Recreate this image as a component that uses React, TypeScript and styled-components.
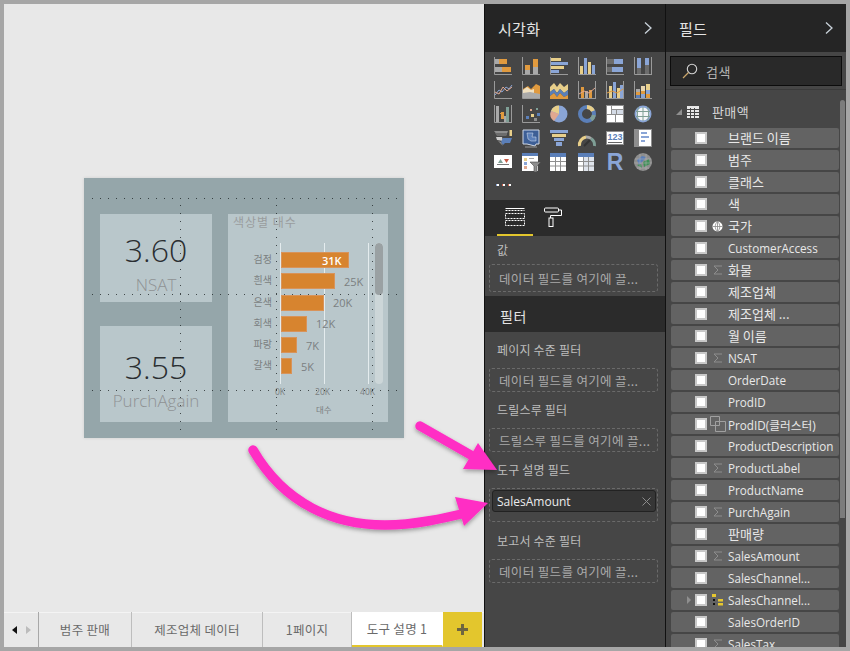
import React from "react"
import styled, { createGlobalStyle } from "styled-components"

const GlobalStyle = createGlobalStyle`
  html, body {
    margin: 0;
    padding: 0;
    background: #a6a6a6;
    overflow: hidden;
  }
`

const Font = `"Noto Sans CJK KR", "Open Sans", sans-serif`
const LatinFont = `"Open Sans", "Noto Sans CJK KR", sans-serif`

const Frame = styled.div`
  position: relative;
  width: 850px;
  height: 651px;
  box-sizing: border-box;
  padding: 4px;
  background: #a6a6a6;
  display: flex;
  overflow: hidden;
  font-family: ${LatinFont};
`

const Canvas = styled.div`
  width: 480px;
  background: #e8e8e8;
  display: flex;
  flex-direction: column;
  flex-shrink: 0;
`

const CanvasBody = styled.div`
  flex: 1;
  padding: 174px 0 0 80px;
`

const Report = styled.div`
  position: relative;
  width: 320px;
  height: 260px;
  box-sizing: border-box;
  padding: 36px 16px 16px;
  background: #95a6aa;
  box-shadow: 0 0 3px rgba(0, 0, 0, 0.12);
  display: grid;
  grid-template-columns: 112px 160px;
  grid-template-rows: 88px 96px;
  column-gap: 16px;
  row-gap: 24px;
`

const Card = styled.div`
  background: #b9c7cb;
  display: flex;
  flex-direction: column;
  align-items: center;
  min-width: 0;
`

const BigNumber = styled.div<{ $top: number }>`
  font-family: "Open Sans", sans-serif;
  font-weight: 300;
  font-size: 32px;
  line-height: 40px;
  color: #2a2e31;
  margin-top: ${(p) => p.$top}px;
`

const CardLabel = styled.div<{ $gap: number }>`
  font-family: "Open Sans", sans-serif;
  font-weight: 300;
  font-size: 17px;
  line-height: 22px;
  color: #8f9294;
  margin-top: ${(p) => p.$gap}px;
`

const ChartCard = styled.div`
  grid-row: 1 / 3;
  grid-column: 2;
  background: #b9c7cb;
  padding: 0 0 0 5px;
  display: flex;
  flex-direction: column;
`

const ChartTitle = styled.div`
  font-family: ${Font};
  font-size: 12px;
  line-height: 16px;
  color: #9a9d9e;
  letter-spacing: 1px;
`

const ChartBody = styled.div`
  display: flex;
  margin-top: 13px;
  padding-left: 16px;
`

const BarLabels = styled.div`
  width: 23px;
  padding-top: 8px;
  display: flex;
  flex-direction: column;
  gap: 5.3px;
  align-items: flex-end;
`

const BarLabel = styled.div`
  height: 16px;
  font-family: ${Font};
  font-size: 10px;
  line-height: 16px;
  color: #7b7f81;
  white-space: nowrap;
`

const Plot = styled.div`
  position: relative;
  width: 90px;
  margin-left: 8px;
  height: 141px;
  padding-top: 9px;
  box-sizing: border-box;
  display: flex;
  flex-direction: column;
  gap: 5.3px;
  border-left: 1px solid #e4ecee;
`

const GridLine = styled.div<{ $left: number }>`
  position: absolute;
  top: 0;
  bottom: 0;
  left: ${(p) => p.$left}px;
  width: 1px;
  background: #e4ecee;
`

const BarRow = styled.div`
  position: relative;
  display: flex;
  align-items: center;
  height: 16px;
`

const Bar = styled.div`
  height: 16px;
  background: #d7842f;
  box-shadow: inset 0 0 0 1px #d8935a;
  flex-shrink: 0;
`

const BarValue = styled.span<{ $inside?: boolean }>`
  font-family: "Open Sans", sans-serif;
  font-size: 11px;
  font-weight: ${(p) => (p.$inside ? 600 : 400)};
  color: ${(p) => (p.$inside ? "#fff" : "#7b7f81")};
  margin-left: ${(p) => (p.$inside ? "-27px" : "9px")};
  position: relative;
  white-space: nowrap;
`

const ChartScroll = styled.div`
  width: 8px;
  height: 141px;
  margin-left: 5px;
  border-radius: 4px;
  background: #ccd6d8;
  overflow: hidden;
`

const ChartThumb = styled.div`
  height: 52px;
  background: #9aa1a3;
  border-radius: 4px;
`

const AxisRow = styled.div`
  height: 14px;
  margin: 1px 0 0 42px;
  width: 100px;
  font-size: 8.5px;
  color: #7b7f81;
  display: flex;
  justify-content: space-between;
  font-family: "Open Sans", sans-serif;
  line-height: 14px;
`

const AxisTitle = styled.div`
  font-family: ${Font};
  font-size: 8.5px;
  line-height: 12px;
  color: #7b7f81;
  padding: 4px 0 0 83px;
`

const DotH = styled.div<{ $top: number }>`
  position: absolute;
  left: 8px;
  right: 6px;
  top: ${(p) => p.$top}px;
  height: 1px;
  background-image: linear-gradient(to right, rgba(25, 30, 31, 0.75) 1px, transparent 1px);
  background-size: 8px 1px;
`

const DotV = styled.div<{ $left: number }>`
  position: absolute;
  top: 27px;
  bottom: 6px;
  left: ${(p) => p.$left}px;
  width: 1px;
  background-image: linear-gradient(to bottom, rgba(25, 30, 31, 0.75) 1px, transparent 1px);
  background-size: 1px 8px;
`

const TabBar = styled.div`
  height: 35px;
  display: flex;
  align-items: stretch;
  background: #e8e8e8;
  box-shadow: inset 0 1px 0 #f4f4f4;
`

const TabNav = styled.div`
  width: 35px;
  box-sizing: border-box;
  display: flex;
  align-items: center;
  justify-content: center;
  gap: 9px;
  border-right: 1px solid #a8a8a8;
`

const Tab = styled.div<{ $active?: boolean; $w: number }>`
  width: ${(p) => p.$w}px;
  box-sizing: border-box;
  display: flex;
  align-items: center;
  justify-content: center;
  font-family: ${Font};
  font-size: 12.5px;
  color: #6a6a6a;
  letter-spacing: 0.3px;
  border-right: 1px solid ${(p) => (p.$active ? "transparent" : "#bdbdbd")};
  background: ${(p) => (p.$active ? "#fff" : "transparent")};
  border-bottom: ${(p) => (p.$active ? "2px solid #e3c62d" : "none")};
`

const AddTab = styled.div`
  width: 39px;
  background: #e3c62d;
  display: flex;
  align-items: center;
  justify-content: center;
`

const VizPanel = styled.div`
  width: 181px;
  box-sizing: border-box;
  flex-shrink: 0;
  background: #464646;
  display: flex;
  flex-direction: column;
  border-left: 1px solid #111;
`

const FieldsPanel = styled.div`
  width: 181px;
  box-sizing: border-box;
  flex-shrink: 0;
  background: #464646;
  display: flex;
  flex-direction: column;
  position: relative;
  overflow: hidden;
  border-left: 1px solid #111;
`

const PanelHeader = styled.div`
  height: 48px;
  flex-shrink: 0;
  background: #252525;
  display: flex;
  align-items: center;
  justify-content: space-between;
  padding: 0 12px 0 13px;
  font-family: ${Font};
  font-size: 15px;
  color: #e4e4e4;
  letter-spacing: 0.3px;
`

const IconGrid = styled.div`
  height: 148px;
  flex-shrink: 0;
  box-sizing: border-box;
  padding: 5px 0 0 9px;
  display: grid;
  grid-template-columns: repeat(6, 18px);
  grid-auto-rows: 18px;
  column-gap: 10px;
  row-gap: 6px;
`

const MoreSlot = styled.div`
  margin: 4px 0 0 2px;
  line-height: 0;
`

const VizTabs = styled.div`
  height: 36px;
  flex-shrink: 0;
  background: #2b2b2b;
  display: flex;
  padding-left: 12px;
`

const VizTab = styled.div<{ $active?: boolean }>`
  width: 36px;
  box-sizing: border-box;
  margin-right: 2px;
  display: flex;
  align-items: center;
  justify-content: center;
  border-bottom: 2px solid ${(p) => (p.$active ? "#e3c62d" : "transparent")};
`

const SectionLabel = styled.div`
  font-family: ${Font};
  font-size: 12px;
  line-height: 16px;
  color: #bdbdbd;
  padding-left: 12px;
  letter-spacing: 0.2px;
`

const DropZone = styled.div<{ $mt?: number; $mb?: number; $h?: number }>`
  height: ${(p) => p.$h || 24}px;
  margin: ${(p) => p.$mt ?? 10}px 7px ${(p) => p.$mb ?? 10}px 4px;
  box-sizing: border-box;
  border: 1px dashed #6a6a6a;
  border-radius: 3px;
  display: flex;
  align-items: center;
  padding-left: 9px;
  font-family: ${Font};
  font-size: 12.5px;
  color: #a9a9a9;
  white-space: nowrap;
  letter-spacing: 0.35px;
`

const FilledZone = styled.div`
  height: 34px;
  margin: 10px 7px 11px 4px;
  box-sizing: border-box;
  border: 1px dashed #6a6a6a;
  border-radius: 3px;
  padding: 1px 1px 1px 2px;
`

const FilledField = styled.div`
  height: 22px;
  box-sizing: border-box;
  background: #363636;
  border: 1px solid #222;
  border-radius: 3px;
  display: flex;
  align-items: center;
  justify-content: space-between;
  padding: 0 4px 0 4px;
  font-family: "Open Sans", sans-serif;
  font-size: 12px;
  color: #ececec;
`

const FilterHeader = styled.div`
  height: 36px;
  flex-shrink: 0;
  box-sizing: border-box;
  background: #2b2b2b;
  margin-bottom: 10px;
  display: flex;
  align-items: center;
  padding: 3px 0 0 15px;
  font-family: ${Font};
  font-size: 14px;
  color: #e4e4e4;
  letter-spacing: 0.5px;
`

const ValueSection = styled.div`
  height: 60px;
  flex-shrink: 0;
  box-sizing: border-box;
  padding-top: 6px;
`

const SearchRow = styled.div`
  height: 38px;
  flex-shrink: 0;
  box-sizing: border-box;
  padding: 4px 4px 0;
  border-bottom: 1px solid #3a3a3a;
`

const SearchBox = styled.div`
  height: 30px;
  box-sizing: border-box;
  background: #292929;
  border: 1px solid #0c0c0c;
  display: flex;
  align-items: center;
  padding-left: 11px;
  gap: 8px;
  font-family: ${Font};
  font-size: 13px;
  color: #b4b4b4;
  letter-spacing: 0.5px;
`

const FieldList = styled.div`
  flex: 1;
  padding: 12px 0 0 5px;
  display: flex;
  flex-direction: column;
  gap: 2px;
`

const TableRow = styled.div`
  height: 20px;
  margin-bottom: 4px;
  padding-left: 4px;
  display: flex;
  align-items: center;
  font-family: ${Font};
  font-size: 13px;
  color: #d4d4d4;
  letter-spacing: 0.4px;
`

const TableArrow = styled.span`
  margin-right: 4px;
  line-height: 0;
`

const TableGlyph = styled.span`
  margin-right: 13px;
  line-height: 0;
`

const TableName = styled.span`
  margin-top: -2px;
`

const Row = styled.div`
  position: relative;
  width: 168px;
  height: 20px;
  flex-shrink: 0;
  box-sizing: border-box;
  background: #636363;
  border-radius: 2px;
  display: flex;
  align-items: center;
  color: #e8e8e8;
  white-space: nowrap;
`

const RowName = styled.span<{ $kr: boolean }>`
  font-family: ${(p) => (p.$kr ? Font : LatinFont)};
  font-size: ${(p) => (p.$kr ? 13 : 11.7)}px;
  margin-top: ${(p) => (p.$kr ? -2 : 0)}px;
`

const Check = styled.span`
  width: 12px;
  height: 12px;
  box-sizing: border-box;
  flex-shrink: 0;
  background: #fff;
  border: 2px solid #c8c8c8;
  margin-left: 24px;
`

const TypeSlot = styled.span`
  width: 21px;
  height: 16px;
  flex-shrink: 0;
  display: flex;
  align-items: center;
  justify-content: center;
`

const Expander = styled.span`
  position: absolute;
  left: 16px;
  top: 6px;
  width: 0;
  height: 0;
  border-left: 4px solid #8f8f8f;
  border-top: 4px solid transparent;
  border-bottom: 4px solid transparent;
`

const Scrollbar = styled.div`
  position: absolute;
  right: 1px;
  top: 96px;
  width: 5px;
  height: 418px;
  border-radius: 3px 3px 0 0;
  background: #7c7c7c;
`

const Arrows = styled.svg`
  position: absolute;
  left: 0;
  top: 0;
  pointer-events: none;
`

const Chevron = () => (
  <svg width="10" height="14" viewBox="0 0 10 14">
    <path d="M2 1.5 L8 7 L2 12.5" fill="none" stroke="#c9d2da" strokeWidth="1.3" />
  </svg>
)

const c = { o: "#e09a3f", b: "#8aa5d6", y: "#e8cf8a", g: "#a9a9a9", d: "#6c6c6c", r: "#e0a890", w: "#ffffff", l: "#d4dbe6", a: "#8e8e8e", s: "#5b7fb8", t: "#7f9f96" }

type R = [number, number, number, number, string]

const Axis = () => <path d="M0.5 0 V17.5 H18" fill="none" stroke="#9a9a9a" strokeWidth="1" />

const rects = (list: R[]) => list.map((r, i) => <rect key={i} x={r[0]} y={r[1]} width={r[2]} height={r[3]} fill={r[4]} />)

const vizIcons: React.ReactNode[] = [
  <><Axis />{rects([[1, 2, 4, 5, c.g], [5, 2, 8, 5, c.o], [1, 10, 7, 5, c.g], [8, 10, 9, 5, c.o]])}</>,
  <><Axis />{rects([[3, 8, 5, 9, c.o], [3, 13, 5, 4, c.g], [11, 2, 5, 15, c.o], [11, 10, 5, 7, c.g]])}</>,
  <><Axis />{rects([[1, 1, 10, 3, c.y], [1, 5, 17, 3, c.b], [1, 9, 13, 3, c.y], [1, 13, 8, 3, c.b]])}</>,
  <><Axis />{rects([[2, 9, 3, 8, c.y], [6, 1, 3, 16, c.b], [10, 5, 3, 12, c.y], [14, 8, 3, 9, c.b]])}</>,
  <><Axis />{rects([[1, 2, 7, 5, c.d], [8, 2, 9, 5, c.b], [1, 10, 5, 5, c.d], [6, 10, 11, 5, c.b]])}</>,
  <><Axis /><path d="M17.5 0 V17.5" stroke="#9a9a9a" />{rects([[3, 1, 4, 10, c.b], [3, 11, 4, 6, c.d], [11, 1, 4, 7, c.b], [11, 8, 4, 9, c.d]])}</>,
  <><Axis /><path d="M1 14 L5 9 L8 11 L12 6 L15 8 L18 4" fill="none" stroke={c.b} strokeWidth="1" /><path d="M1 11 L5 13 L9 6 L13 10 L18 6" fill="none" stroke={c.r} strokeWidth="1" /></>,
  <><Axis /><path d="M1 8 L6 5 L9 8 L14 3 L18 5 V17 H1Z" fill={c.o} /><path d="M1 9 L5 6 L9 9 L12 8 V17 H1Z" fill="#f0e0c0" /><path d="M1 12 L8 11 L18 13 V17 H1Z" fill={c.g} /></>,
  <><path d="M0 6 L4 2 L7 6 L10 2 L14 6 L18 3 V9 L14 12 L10 8 L7 12 L4 8 L0 11Z" fill={c.y} /><path d="M0 11 L4 8 L7 12 L10 8 L14 12 L18 9 V14 L14 16 L10 12 L7 16 L4 12 L0 15Z" fill={c.s} /><path d="M0 15 L4 12 L7 16 L10 12 L14 16 L18 14 V18 H0Z" fill={c.o} /></>,
  <><Axis /><path d="M17.5 0 V17.5" stroke="#9a9a9a" />{rects([[3, 6, 3, 11, c.o], [7, 10, 3, 7, c.g], [11, 9, 3, 8, c.o]])}<path d="M1 13 L6 10 L11 12 L17 7" fill="none" stroke={c.r} /></>,
  <><Axis /><path d="M17.5 0 V17.5" stroke="#9a9a9a" />{rects([[3, 5, 3, 12, c.y], [7, 1, 3, 16, c.b], [11, 7, 3, 10, c.y], [14, 4, 3, 13, c.b]])}<path d="M1 12 L6 10 L11 12 L17 8" fill="none" stroke={c.o} /></>,
  <><Axis />{rects([[2, 8, 4, 3, c.g], [2, 11, 4, 3, c.o], [2, 14, 4, 3, c.s], [7, 5, 4, 5, "#e8d5ae"], [7, 10, 4, 3, c.o], [7, 13, 4, 4, c.b], [12, 3, 4, 6, c.y], [12, 9, 4, 4, c.b], [12, 13, 4, 4, c.o]])}</>,
  <><Axis /><path d="M17.5 0 V17.5" stroke="#9a9a9a" />{rects([[2, 1, 3, 16, c.g], [6, 8, 4, 1, c.o], [7, 7, 3, 7, c.o], [10, 11, 2, 6, c.g], [12, 2, 3, 15, c.t]])}</>,
  <><Axis />{rects([[4, 11, 3, 3, c.s], [8, 4, 2, 2, c.r], [9, 9, 3, 3, c.y], [14, 3, 2, 2, c.t], [15, 8, 3, 3, c.s], [12, 13, 3, 3, c.a]])}</>,
  <><circle cx="9" cy="9" r="8.5" fill={c.b} /><path d="M9 9 L9 0.5 A8.5 8.5 0 0 0 1 6Z" fill={c.y} /><path d="M9 9 L1 6 A8.5 8.5 0 0 0 4 16Z" fill={c.r} /></>,
  <><circle cx="9" cy="9" r="7" fill="none" stroke={c.s} strokeWidth="4" /><path d="M9 2 A7 7 0 0 1 15 6" fill="none" stroke={c.y} strokeWidth="4" /><path d="M15.8 10 A7 7 0 0 1 13 14.7" fill="none" stroke={c.t} strokeWidth="4" /></>,
  <><rect width="18" height="18" fill={c.a} />{rects([[1, 1, 4, 8, c.w], [6, 1, 11, 3, c.w], [6, 5, 4, 4, c.l], [11, 5, 6, 4, c.l], [1, 10, 8, 7, c.w], [10, 10, 7, 7, c.w]])}</>,
  <><circle cx="9" cy="9" r="8.5" fill={c.b} /><circle cx="9" cy="9" r="6.5" fill="#f4f6f8" /><path d="M9 2 V16 M4.5 2 C3 7 3 11 4.5 16 M13.5 2 C15 7 15 11 13.5 16 M2 6.5 H16 M2 11.5 H16" stroke={c.t} fill="none" strokeWidth="1" /></>,
  <><path d="M0 2 H14 L12 7 H4Z" fill={c.a} /><path d="M1 4 H13 L12 7 H3Z" fill={c.d} /><path d="M2 8 H8 L9 12 L3 11Z" fill="#cfcfcf" /><path d="M9 9 H18 L16 14 H11 L9 16 L7 13Z" fill={c.s} /><path d="M4 12 L9 17 L7 13Z" fill={c.a} /><rect x="15.5" y="1" width="2.5" height="6" fill={c.y} /></>,
  <><path d="M1 1 H17 V15 H14 L13 17 L5 15 H1Z" fill="#3d5f96" stroke="#cfd8e6" strokeWidth="1" /><path d="M5 4 H11 L10 8 H14 V12 H9 L6 10Z" fill={c.s} stroke="#dfe6f0" strokeWidth="0.5" /><path d="M3 18 H15" stroke="#999" /></>,
  <>{rects([[0, 1, 18, 3, c.b], [2, 5, 14, 3, c.y], [4, 9, 10, 3, c.b], [6, 13, 6, 4, c.b]])}</>,
  <><path d="M1.5 17 A8 8 0 0 1 8 8" fill="none" stroke={c.y} strokeWidth="3" /><path d="M8 8 A8 8 0 0 1 13 9.5" fill="none" stroke={c.g} strokeWidth="3" /><path d="M13 9.5 A8 8 0 0 1 16.5 17" fill="none" stroke={c.t} strokeWidth="3" /><path d="M6 17 L12 11" stroke="#333" strokeWidth="2" /></>,
  <><rect x="0.5" y="2.5" width="17" height="13" fill={c.w} stroke={c.a} /><text x="9" y="11" textAnchor="middle" fontSize="9" fontWeight="700" fontFamily="Liberation Sans" fill={c.s}>123</text><rect x="2" y="13" width="14" height="1" fill="#666" /></>,
  <><rect x="0.5" y="0.5" width="17" height="17" fill={c.w} stroke={c.a} /><rect x="1" y="1" width="4" height="16" fill={c.a} />{rects([[7, 3, 6, 2, c.b], [7, 7, 8, 2, c.b], [7, 11, 4, 2, c.b]])}</>,
  <><rect x="0" y="2" width="18" height="13" fill={c.w} /><path d="M4 10 L6.5 6 L9 10Z" fill={c.t} /><path d="M10 6 H15 L12.5 10Z" fill="#c65a45" /><rect x="3" y="11" width="12" height="1" fill="#777" /></>,
  <><rect x="0" y="0" width="16" height="18" fill={c.w} /><rect x="0" y="0" width="16" height="3" fill={c.s} />{rects([[2, 5, 3, 3, c.y], [2, 9, 3, 3, c.b], [2, 13, 3, 3, c.r], [7, 5, 5, 1, c.g]])}<path d="M8 9 H19 L15 13 V19 H12 V13Z" fill={c.a} stroke="#464646" strokeWidth="0.6" /></>,
  <><rect width="16" height="18" x="0" fill={c.w} /><rect width="16" height="4" fill={c.s} /><path d="M5.5 4 V18 M10.5 4 V18 M0 8.5 H16 M0 13 H16" stroke={c.a} strokeWidth="1" /></>,
  <><rect width="16" height="18" x="0" fill="#dfe4ec" /><rect width="16" height="4" fill={c.s} /><rect x="0" y="4" width="5" height="14" fill={c.w} /><path d="M5.5 4 V18 M10.5 4 V18 M0 8.5 H16 M0 13 H16" stroke={c.a} strokeWidth="1" /></>,
  <><text x="9" y="17" textAnchor="middle" fontSize="23" fontWeight="700" fontFamily="Liberation Sans" fill={c.b}>R</text></>,
  <><circle cx="9" cy="9" r="9" fill={c.a} /><path d="M3 7 L8 3 L12 4 L9 8 L5 12Z" fill={c.s} /><path d="M9 9 L15 6 L16 11 L10 14Z" fill="#3f8f58" /><path d="M3 12 L7 11 L8 15Z" fill="#3f8f58" /><path d="M1 6 H17 M0 10 H18 M3 15 H15 M6 1 V17 M12 1 V17" stroke="#b5b5b5" strokeWidth="0.5" /></>,
]

const MoreDots = () => (
  <svg width="16" height="4" viewBox="0 0 16 4">
    <rect x="0" y="1" width="3" height="2" fill="#fff" />
    <rect x="0" y="1" width="1" height="2" fill="#8aa5d6" />
    <rect x="6" y="1" width="3" height="2" fill="#fff" />
    <rect x="6" y="1" width="1" height="2" fill="#c65a45" />
    <rect x="12" y="1" width="3" height="2" fill="#fff" />
    <rect x="12" y="1" width="1" height="2" fill="#c65a45" />
  </svg>
)

const Sigma = () => (
  <svg width="10" height="10" viewBox="0 0 10 10">
    <path d="M9 1 H1 L5 5 L1 9 H9" fill="none" stroke="#8e8e8e" strokeWidth="1" />
  </svg>
)

const Globe = () => (
  <svg width="11" height="11" viewBox="0 0 11 11">
    <circle cx="5.5" cy="5.5" r="5" fill="#fff" />
    <path d="M5.5 0.5 V10.5 M0.5 5.5 H10.5 M5.5 0.5 C2.5 3 2.5 8 5.5 10.5 M5.5 0.5 C8.5 3 8.5 8 5.5 10.5" fill="none" stroke="#8a8a8a" strokeWidth="0.8" />
  </svg>
)

const Cluster = () => (
  <svg width="16" height="16" viewBox="0 0 16 16">
    <path d="M0.5 0.5 H9.5 V9.5 H0.5Z M5.5 5.5 H15.5 V15.5 H5.5Z" fill="none" stroke="#a0a0a0" strokeWidth="1" />
  </svg>
)

const Hierarchy = () => (
  <svg width="11" height="12" viewBox="0 0 11 12">
    <rect x="0" y="0" width="4" height="3" fill="#e6c72f" />
    <rect x="6" y="5" width="5" height="2.5" fill="#e6c72f" />
    <rect x="6" y="9" width="5" height="2.5" fill="#e6c72f" />
    <rect x="1" y="5" width="2" height="2" fill="#111" />
    <rect x="1" y="9" width="2" height="2" fill="#111" />
  </svg>
)

const TableIcon = () => (
  <svg width="12" height="12" viewBox="0 0 12 12">
    <rect width="12" height="12" fill="#e8e8e8" />
    <path d="M0 3.5 H12 M0 6.5 H12 M0 9.5 H12 M3.5 2 V12 M7.5 2 V12" stroke="#464646" strokeWidth="1" />
  </svg>
)

const FieldsTabIcon = () => (
  <svg width="20" height="20" viewBox="0 0 20 20">
    <path d="M0.5 1.5 H19.5" stroke="#fff" strokeWidth="1" fill="none" />
    <path d="M0.5 3.5 H19.5" stroke="#fff" strokeWidth="1" strokeDasharray="2 1" fill="none" />
    <rect x="0.5" y="6.5" width="19" height="5" fill="none" stroke="#fff" strokeDasharray="2 1" />
    <rect x="0.5" y="13.5" width="19" height="5" fill="none" stroke="#fff" strokeDasharray="2 1" />
  </svg>
)

const RollerIcon = () => (
  <svg width="18" height="20" viewBox="0 0 18 20">
    <rect x="0.5" y="1" width="14" height="4" rx="1" fill="none" stroke="#fff" />
    <path d="M14.5 3 H17.5 V8.5 H6.5 V11" fill="none" stroke="#fff" />
    <rect x="5" y="11" width="4" height="8.5" fill="none" stroke="#fff" />
  </svg>
)

const SearchIcon = () => (
  <svg width="16" height="16" viewBox="0 0 16 16">
    <circle cx="10" cy="6" r="4.7" fill="none" stroke="#d4d4d4" strokeWidth="1.1" />
    <path d="M6.5 9.5 L1 15" stroke="#c9a56a" strokeWidth="1.3" />
  </svg>
)

const Close = () => (
  <svg width="9" height="9" viewBox="0 0 9 9">
    <path d="M0.5 0.5 L8.5 8.5 M8.5 0.5 L0.5 8.5" stroke="#8c8c8c" strokeWidth="1" />
  </svg>
)

type Kind = "sigma" | "globe" | "cluster" | "hier"

const fields: { name: string; kind?: Kind; expand?: boolean }[] = [
  { name: "브랜드 이름" },
  { name: "범주" },
  { name: "클래스" },
  { name: "색" },
  { name: "국가", kind: "globe" },
  { name: "CustomerAccess" },
  { name: "화물", kind: "sigma" },
  { name: "제조업체" },
  { name: "제조업체 ..." },
  { name: "월 이름" },
  { name: "NSAT", kind: "sigma" },
  { name: "OrderDate" },
  { name: "ProdID" },
  { name: "ProdID(클러스터)", kind: "cluster" },
  { name: "ProductDescription" },
  { name: "ProductLabel", kind: "sigma" },
  { name: "ProductName" },
  { name: "PurchAgain", kind: "sigma" },
  { name: "판매량" },
  { name: "SalesAmount", kind: "sigma" },
  { name: "SalesChannel..." },
  { name: "SalesChannel...", kind: "hier", expand: true },
  { name: "SalesOrderID" },
  { name: "SalesTax", kind: "sigma" },
]

const kindIcon = (k?: Kind) => {
  if (k === "sigma") return <Sigma />
  if (k === "globe") return <Globe />
  if (k === "cluster") return <Cluster />
  if (k === "hier") return <Hierarchy />
  return null
}

const bars = [
  { name: "검정", w: 68, value: "31K", inside: true },
  { name: "흰색", w: 54, value: "25K" },
  { name: "은색", w: 43, value: "20K" },
  { name: "회색", w: 26, value: "12K" },
  { name: "파랑", w: 16, value: "7K" },
  { name: "갈색", w: 11, value: "5K" },
]

const App = () => {
  return (
    <>
      <GlobalStyle />
      <Frame>
        <Canvas>
          <CanvasBody>
            <Report>
              <Card>
                <BigNumber $top={16}>3.60</BigNumber>
                <CardLabel $gap={4}>NSAT</CardLabel>
              </Card>
              <ChartCard>
                <ChartTitle>색상별 대수</ChartTitle>
                <ChartBody>
                  <BarLabels>
                    {bars.map((b) => (
                      <BarLabel key={b.name}>{b.name}</BarLabel>
                    ))}
                  </BarLabels>
                  <Plot>
                    <GridLine $left={43} />
                    <GridLine $left={87} />
                    {bars.map((b) => (
                      <BarRow key={b.name}>
                        <Bar style={{ width: b.w }} />
                        <BarValue $inside={b.inside}>{b.value}</BarValue>
                      </BarRow>
                    ))}
                  </Plot>
                  <ChartScroll>
                    <ChartThumb />
                  </ChartScroll>
                </ChartBody>
                <AxisRow>
                  <span>0K</span>
                  <span>20K</span>
                  <span>40K</span>
                </AxisRow>
                <AxisTitle>대수</AxisTitle>
              </ChartCard>
              <Card>
                <BigNumber $top={21}>3.55</BigNumber>
                <CardLabel $gap={3}>PurchAgain</CardLabel>
              </Card>
              {[20, 116, 212].map((t) => (
                <DotH key={t} $top={t} />
              ))}
              {[96, 192, 288].map((l) => (
                <DotV key={l} $left={l} />
              ))}
            </Report>
          </CanvasBody>
          <TabBar>
            <TabNav>
              <svg width="5" height="8" viewBox="0 0 5 8">
                <path d="M5 0 V8 L0 4Z" fill="#111" />
              </svg>
              <svg width="5" height="8" viewBox="0 0 5 8">
                <path d="M0 0 V8 L5 4Z" fill="#bcbcbc" />
              </svg>
            </TabNav>
            <Tab $w={93}>범주 판매</Tab>
            <Tab $w={131}>제조업체 데이터</Tab>
            <Tab $w={89}>1페이지</Tab>
            <Tab $w={91} $active>
              도구 설명 1
            </Tab>
            <AddTab>
              <svg width="11" height="11" viewBox="0 0 11 11">
                <path d="M0 5.5 H11 M5.5 0 V11" stroke="#6e6540" strokeWidth="3" />
              </svg>
            </AddTab>
          </TabBar>
        </Canvas>

        <VizPanel>
          <PanelHeader>
            시각화
            <Chevron />
          </PanelHeader>
          <IconGrid>
            {vizIcons.map((icon, i) => (
              <svg key={i} width="18" height="18" viewBox="0 0 18 18" overflow="visible">
                {icon}
              </svg>
            ))}
            <MoreSlot>
              <MoreDots />
            </MoreSlot>
          </IconGrid>
          <VizTabs>
            <VizTab $active>
              <FieldsTabIcon />
            </VizTab>
            <VizTab>
              <RollerIcon />
            </VizTab>
          </VizTabs>
          <ValueSection>
            <SectionLabel>값</SectionLabel>
            <DropZone $mt={6} $mb={0} $h={28}>
              데이터 필드를 여기에 끌...
            </DropZone>
          </ValueSection>
          <FilterHeader>필터</FilterHeader>
          <SectionLabel>페이지 수준 필터</SectionLabel>
          <DropZone>데이터 필드를 여기에 끌...</DropZone>
          <SectionLabel>드릴스루 필터</SectionLabel>
          <DropZone>드릴스루 필드를 여기에 끌...</DropZone>
          <SectionLabel>도구 설명 필드</SectionLabel>
          <FilledZone>
            <FilledField>
              SalesAmount
              <Close />
            </FilledField>
          </FilledZone>
          <SectionLabel>보고서 수준 필터</SectionLabel>
          <DropZone $mb={0}>데이터 필드를 여기에 끌...</DropZone>
        </VizPanel>

        <FieldsPanel>
          <PanelHeader>
            필드
            <Chevron />
          </PanelHeader>
          <SearchRow>
            <SearchBox>
              <SearchIcon />
              검색
            </SearchBox>
          </SearchRow>
          <FieldList>
            <TableRow>
              <TableArrow>
                <svg width="8" height="8" viewBox="0 0 8 8">
                  <path d="M7 1 V7 H1Z" fill="#8f8f8f" />
                </svg>
              </TableArrow>
              <TableGlyph>
                <TableIcon />
              </TableGlyph>
              <TableName>판매액</TableName>
            </TableRow>
            {fields.map((f, i) => (
              <Row key={i}>
                {f.expand && <Expander />}
                <Check />
                <TypeSlot>{kindIcon(f.kind)}</TypeSlot>
                <RowName $kr={/^[가-힣]/.test(f.name)}>{f.name}</RowName>
              </Row>
            ))}
          </FieldList>
          <Scrollbar />
        </FieldsPanel>

        <Arrows width="850" height="651" viewBox="0 0 850 651">
          <defs>
            <filter id="arrowShadow" x="-10%" y="-10%" width="120%" height="130%">
              <feDropShadow dx="0" dy="2" stdDeviation="2" floodColor="#000" floodOpacity="0.35" />
            </filter>
          </defs>
          <g filter="url(#arrowShadow)" fill="#ff2ec4" stroke="none">
            <path d="M420 426 L476 458" stroke="#ff2ec4" strokeWidth="9.5" strokeLinecap="round" fill="none" />
            <path d="M478 443 L497 470 L463 469Z" />
            <path d="M253 450 C285 505 335 525 385 525 C415 525 445 518 470 512" stroke="#ff2ec4" strokeWidth="9.5" strokeLinecap="round" fill="none" />
            <path d="M455 497 L488 503 L464 526Z" />
          </g>
        </Arrows>
      </Frame>
    </>
  )
}

export default App
